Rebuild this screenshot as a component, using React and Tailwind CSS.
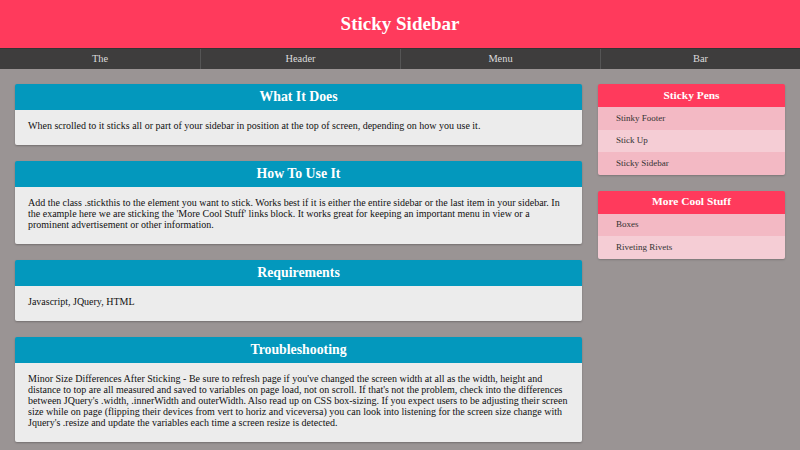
import React from 'react';

const NAV = ['The', 'Header', 'Menu', 'Bar'];

const SECTIONS = [
    {
        title: 'What It Does',
        body: 'When scrolled to it sticks all or part of your sidebar in position at the top of screen, depending on how you use it.',
    },
    {
        title: 'How To Use It',
        body: "Add the class .stickthis to the element you want to stick. Works best if it is either the entire sidebar or the last item in your sidebar. In the example here we are sticking the 'More Cool Stuff' links block. It works great for keeping an important menu in view or a prominent advertisement or other information.",
    },
    {
        title: 'Requirements',
        body: 'Javascript, JQuery, HTML',
    },
    {
        title: 'Troubleshooting',
        body: "Minor Size Differences After Sticking - Be sure to refresh page if you've changed the screen width at all as the width, height and distance to top are all measured and saved to variables on page load, not on scroll. If that's not the problem, check into the differences between JQuery's .width, .innerWidth and outerWidth. Also read up on CSS box-sizing. If you expect users to be adjusting their screen size while on page (flipping their devices from vert to horiz and viceversa) you can look into listening for the screen size change with Jquery's .resize and update the variables each time a screen resize is detected.",
    },
];

const SIDE_BLOCKS = [
    { title: 'Sticky Pens', links: ['Stinky Footer', 'Stick Up', 'Sticky Sidebar'] },
    { title: 'More Cool Stuff', links: ['Boxes', 'Riveting Rivets'] },
];

function Section({ title, body }) {
    return (
        <div className="rounded-[2px] overflow-hidden shadow-[0_1px_2px_rgba(0,0,0,0.25)]">
            <h2 className="h-[26px] bg-[#0398bd] text-white font-bold text-[13.8px] flex items-center justify-center">
                {title}
            </h2>
            <div className="bg-[#ececec] text-[#111] text-[10px] leading-[11px] px-[13px] pt-[10px] pb-[14px]">
                <p>{body}</p>
            </div>
        </div>
    );
}

function SideBlock({ title, links }) {
    return (
        <div className="rounded-[2px] overflow-hidden shadow-[0_1px_2px_rgba(0,0,0,0.2)]">
            <h3 className="h-[23px] bg-[#ff3a5c] text-white font-bold text-[11.4px] flex items-center justify-center">
                {title}
            </h3>
            <ul>
                {links.map((link, i) => (
                    <li
                        key={link}
                        className={`h-[22.5px] flex items-center pl-[18px] text-[9px] text-[#333] ${i % 2 === 0 ? 'bg-[#f3b9c4]' : 'bg-[#f5cdd5]'}`}
                    >
                        {link}
                    </li>
                ))}
            </ul>
        </div>
    );
}

export default function App() {
    return (
        <div className="w-[800px] h-[450px] overflow-hidden bg-[#9a9494] font-['Liberation_Serif','Times_New_Roman',serif]">
            {/* Header */}
            <header className="h-[48px] bg-[#ff3a5c] flex items-center justify-center">
                <h1 className="text-white font-bold text-[19px]">Sticky Sidebar</h1>
            </header>

            {/* Nav */}
            <nav className="h-[21px] bg-[#3e3d3d] border-t border-[#333] grid grid-cols-4">
                {NAV.map((item, i) => (
                    <div
                        key={item}
                        className={`flex items-center justify-center text-[#dcdcdc] text-[10.4px] ${i > 0 ? 'border-l border-[#555]' : ''}`}
                    >
                        {item}
                    </div>
                ))}
            </nav>

            {/* Content */}
            <div className="flex gap-[16px] px-[15px] pt-[15px]">
                <main className="w-[567px] flex flex-col gap-[16px]">
                    {SECTIONS.map((s) => (
                        <Section key={s.title} {...s} />
                    ))}
                </main>
                <aside className="w-[187px] flex flex-col gap-[16px]">
                    {SIDE_BLOCKS.map((b) => (
                        <SideBlock key={b.title} {...b} />
                    ))}
                </aside>
            </div>
        </div>
    );
}
